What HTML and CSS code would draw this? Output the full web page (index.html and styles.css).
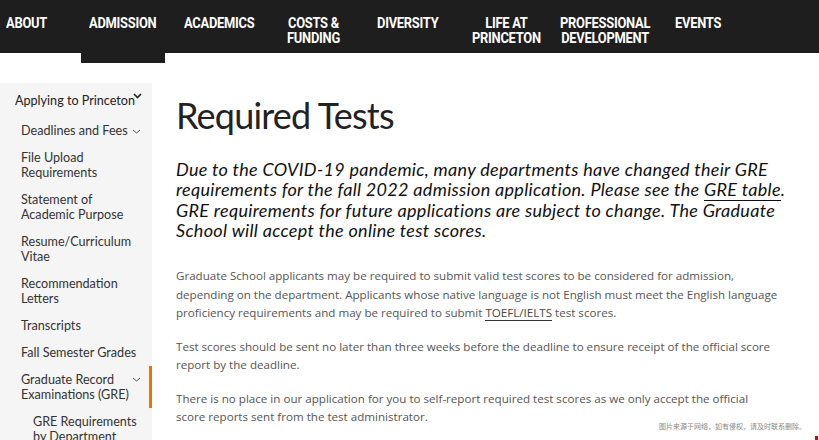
FILE: index.html
```html
<!DOCTYPE html>
<html lang="en">
<head>
<meta charset="utf-8">
<title>Required Tests</title>
<link rel="stylesheet" href="styles.css">
</head>
<body>
<header class="topnav">
  <a class="nav-item nav-about" href="#"><span>ABOUT</span></a>
  <a class="nav-item nav-admission active" href="#"><span>ADMISSION</span></a>
  <a class="nav-item nav-academics" href="#"><span>ACADEMICS</span></a>
  <a class="nav-item nav-costs" href="#"><span>COSTS &amp;<br>FUNDING</span></a>
  <a class="nav-item nav-diversity" href="#"><span>DIVERSITY</span></a>
  <a class="nav-item nav-life" href="#"><span>LIFE AT<br>PRINCETON</span></a>
  <a class="nav-item nav-prof" href="#"><span>PROFESSIONAL<br>DEVELOPMENT</span></a>
  <a class="nav-item nav-events" href="#"><span>EVENTS</span></a>
</header>
<div class="page">
  <nav class="sidebar">
    <div class="side-item level-0">
      <span>Applying to Princeton</span>
      <svg class="chev chev-bold" width="9" height="6" viewBox="0 0 9 6"><polyline points="1,1 4.5,4.5 8,1" fill="none" stroke="#222" stroke-width="1.6"/></svg>
    </div>
    <div class="side-item level-1">
      <span>Deadlines and Fees</span>
      <svg class="chev chev-thin" width="9" height="5" viewBox="0 0 9 5"><polyline points="1,1 4.5,4 8,1" fill="none" stroke="#555" stroke-width="1"/></svg>
    </div>
    <div class="side-item level-1">File Upload<br>Requirements</div>
    <div class="side-item level-1">Statement of<br>Academic Purpose</div>
    <div class="side-item level-1">Resume/Curriculum<br>Vitae</div>
    <div class="side-item level-1">Recommendation<br>Letters</div>
    <div class="side-item level-1">Transcripts</div>
    <div class="side-item level-1">Fall Semester Grades</div>
    <div class="side-item level-1 current">
      <span>Graduate Record<br>Examinations (GRE)</span>
      <svg class="chev chev-thin" width="9" height="5" viewBox="0 0 9 5"><polyline points="1,1 4.5,4 8,1" fill="none" stroke="#555" stroke-width="1"/></svg>
    </div>
    <div class="side-item level-2">GRE Requirements<br>by Department</div>
  </nav>
  <main class="content">
    <h1 class="title">Required Tests</h1>
    <p class="intro">Due to the COVID-19 pandemic, many departments have changed their GRE<br>requirements for the fall 2022 admission application. Please see the <a href="#">GRE table</a>.<br>GRE requirements for future applications are subject to change. The Graduate<br>School will accept the online test scores.</p>
    <p class="body-text">Graduate School applicants may be required to submit valid test scores to be considered for admission,<br>depending on the department. Applicants whose native language is not English must meet the English language<br>proficiency requirements and may be required to submit <a href="#">TOEFL/IELTS</a> test scores.</p>
    <p class="body-text">Test scores should be sent no later than three weeks before the deadline to ensure receipt of the official score<br>report by the deadline.</p>
    <p class="body-text">There is no place in our application for you to self-report required test scores as we only accept the official<br>score reports sent from the test administrator.</p>
  </main>
</div>
<div class="watermark">图片来源于网络，如有侵权，请及时联系删除。</div>
<div class="corner-mark"></div>
</body>
</html>
```
FILE: styles.css
```css
html, body {
  margin: 0;
  padding: 0;
  background: #fff;
  overflow: hidden;
}
body {
  width: 819px;
  height: 440px;
  position: relative;
  font-family: Lato, "Noto Sans", sans-serif;
}
a { color: inherit; text-decoration: none; }

.topnav {
  height: 53px;
  background: #1e1e1e;
  display: grid;
  grid-template-columns: 81px 84px 116px 91px 92px 88px 115px 80px 1fr;
  align-items: start;
}
.nav-item {
  position: relative;
  height: 53px;
  box-sizing: border-box;
  padding: 16px 8px 0 8px;
  color: #fff;
  font-family: Roboto, "DejaVu Sans Condensed", sans-serif;
  font-weight: 700;
  font-size: 15px;
  line-height: 15px;
  letter-spacing: -0.3px;
  white-space: nowrap;
}
.nav-item span {
  display: inline-block;
  text-align: center;
  transform: scaleX(0.86);
  transform-origin: left center;
}
.nav-about { padding-left: 6px; }
.nav-academics { padding-left: 19px; }
.nav-costs { padding-left: 6px; }
.nav-diversity { padding-left: 5px; }
.nav-item.active::after {
  content: "";
  position: absolute;
  left: 0;
  right: 0;
  bottom: -10px;
  height: 10px;
  background: #1e1e1e;
}

.page {
  display: flex;
  align-items: flex-start;
}
.sidebar {
  width: 152px;
  flex: none;
  margin-top: 30px;
  background: #f5f5f5;
  padding: 4px 0 20px 0;
  color: #333;
  font-size: 12.6px;
  line-height: 15px;
}
.side-item {
  position: relative;
  padding: 6px 2px 6px 21px;
  white-space: nowrap;
}
.side-item.level-0 {
  padding: 6px 2px 9px 15px;
  color: #222;
}
.side-item.level-2 { padding-left: 33px; }
.side-item.current {
  border-right: 3px solid #e77500;
}
.chev {
  position: absolute;
  right: 11px;
}
.chev-bold { top: 6px; right: 10px; }
.chev-thin { top: 12px; }
.current .chev { right: 8px; top: 11px; }

.content {
  flex: 1;
  padding: 40px 0 0 24px;
}
.title {
  margin: 0;
  font-family: Lato, "Noto Sans", sans-serif;
  font-weight: 400;
  font-size: 36px;
  letter-spacing: -0.8px;
  line-height: 44px;
  color: #222;
}
.intro {
  margin: 22px 0 0 0;
  font-style: italic;
  font-size: 18px;
  letter-spacing: 0.3px;
  line-height: 20.3px;
  color: #111;
  white-space: nowrap;
}
.intro a {
  border-bottom: 1px solid #111;
}
.body-text {
  margin: 15px 0 0 0;
  font-family: "Open Sans", sans-serif;
  font-size: 11.6px;
  line-height: 18.5px;
  color: #555;
  white-space: nowrap;
}
.intro + .body-text { margin-top: 27px; }
.body-text a {
  color: #444;
  border-bottom: 1px solid #333;
}
.watermark {
  position: absolute;
  left: 659px;
  top: 421px;
  font-family: "Noto Sans CJK SC", sans-serif;
  font-size: 7px;
  line-height: 10px;
  color: #888;
}
.corner-mark {
  position: absolute;
  left: 815px;
  top: 436px;
  width: 3px;
  height: 4px;
  background: #d00;
}
```
